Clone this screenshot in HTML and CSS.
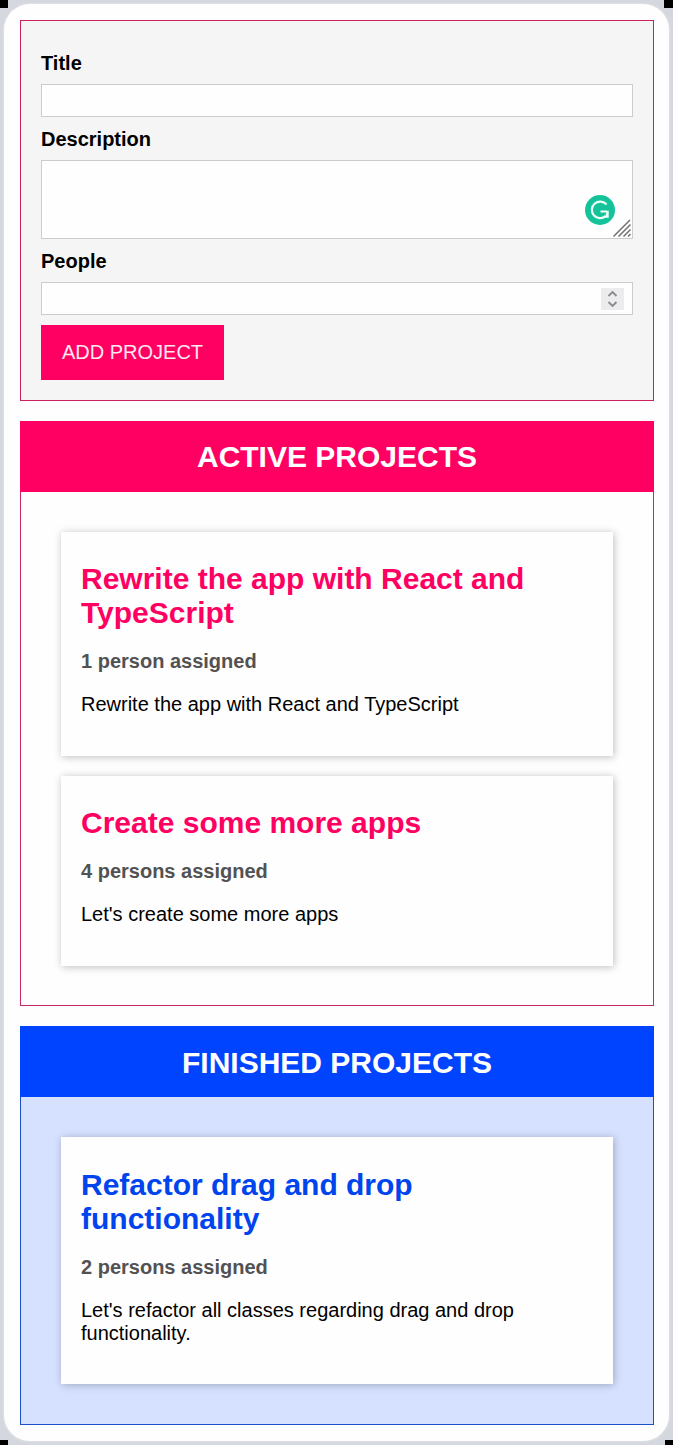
FILE: index.html
```
<!DOCTYPE html>
<html lang="en">
<head>
<meta charset="utf-8">
<title>Projects</title>
<link rel="stylesheet" href="styles.css">
</head>
<body>
<main class="page">
  <form class="project-form">
    <label class="label" for="title">Title</label>
    <input class="field" id="title" type="text">
    <label class="label" for="description">Description</label>
    <div class="control">
      <textarea class="field area" id="description"></textarea>
      <svg class="assistant" viewBox="0 0 30 30"><circle cx="15" cy="15" r="15" fill="#15c39a"/><path d="M21.500 9.500A8.300 8.300 0 1 0 20.500 21.200M15.500 16.500h7" fill="none" stroke="#effffa" stroke-width="2.200"/><path d="M23.700 15.400v7.300h-5.500l2.200-2 1.300-4.200z" fill="#effffa"/></svg>
      <svg class="grip" viewBox="0 0 18 18"><path d="M.5 17.500L17 1M5.500 17.500L17.500 5.500M10.500 17.500l7-7M15 17.500l2.500-2.500" stroke="#707070" stroke-width="1.500"/></svg>
    </div>
    <label class="label" for="people">People</label>
    <div class="control">
      <input class="field" id="people" type="text">
      <svg class="spinner" viewBox="0 0 23 22"><path fill="#ececef" d="M0 0h23v22H0z"/><path d="M7.500 8l4-4 4 4M7.500 14l4 4 4-4" fill="none" stroke="#8a8a8a" stroke-width="1.800"/></svg>
    </div>
    <button class="submit" type="button">ADD PROJECT</button>
  </form>

  <section class="projects active">
    <header class="heading"><h2>ACTIVE PROJECTS</h2></header>
    <div class="list">
      <article class="card">
        <h2>Rewrite the app with React and TypeScript</h2>
        <h3>1 person assigned</h3>
        <p>Rewrite the app with React and TypeScript</p>
      </article>
      <article class="card">
        <h2>Create some more apps</h2>
        <h3>4 persons assigned</h3>
        <p>Let's create some more apps</p>
      </article>
    </div>
  </section>

  <section class="projects finished">
    <header class="heading"><h2>FINISHED PROJECTS</h2></header>
    <div class="list">
      <article class="card">
        <h2>Refactor drag and drop functionality</h2>
        <h3>2 persons assigned</h3>
        <p>Let's refactor all classes regarding drag and drop functionality.</p>
      </article>
    </div>
  </section>
</main>
<i class="corner top-left"></i><i class="corner top-right"></i><i class="corner bottom-left"></i><i class="corner bottom-right"></i>
</body>
</html>
```
FILE: styles.css
```
* { box-sizing: border-box; }
body {
  margin: 0;
  height: 1445px;
  padding: 4px;
  overflow: hidden;
  position: relative;
  background: #d5d7de;
  font: 20px/23px "Liberation Sans", Arial, sans-serif;
  color: #000;
}
h2, h3, p { margin: 0; }
.page {
  height: 1437px;
  padding: 16px 15px 16px 16px;
  border-radius: 26px;
  background: #fefefe;
  box-shadow: 0 0 3px #e9eaee;
  display: flex;
  flex-direction: column;
  gap: 20px;
}
.project-form {
  height: 381px;
  padding: 31px 20px 19px;
  border: 1px solid #cc2060;
  background: #f5f5f5;
}
.label { display: block; margin-bottom: 9px; font-weight: bold; }
.field {
  display: block;
  width: 100%;
  height: 33px;
  margin: 0 0 11px;
  border: 1px solid #ccc;
  background: #fefefe;
  outline: none;
}
.area { height: 79px; resize: none; }
.control { position: relative; }
.assistant { position: absolute; width: 30px; height: 30px; right: 18px; top: 35px; }
.grip { position: absolute; width: 18px; height: 18px; right: 2px; top: 59px; }
.spinner { position: absolute; width: 23px; height: 22px; right: 9px; top: 6px; }
.submit {
  display: block;
  width: 183px;
  height: 55px;
  margin-top: -1px;
  padding: 0;
  border: 0;
  background: #ff0062;
  color: #ffe8f1;
  font: inherit;
}
.heading {
  height: 71px;
  display: flex;
  align-items: center;
  justify-content: center;
  color: #fff;
}
.heading h2 { font-size: 30px; line-height: 34px; padding-top: 1px; }
.list {
  padding: 40px 40px 39px;
  border: 1px solid;
  border-top: 0;
  display: flex;
  flex-direction: column;
  gap: 20px;
}
.active .heading { background: #ff0062; }
.active .list { border-color: #c72866; }
.finished .heading { background: #0044ff; }
.finished .heading h2 { padding-top: 2px; }
.finished .list { padding-bottom: 40px; border-color: #1c50ca; background: #d6e1ff; }
.card {
  padding: 30px 20px 40px;
  background: #fefefe;
  box-shadow: 1px 1px 8px rgba(0, 0, 0, .26);
  display: flex;
  flex-direction: column;
  gap: 20px;
}
.card h2 { font-size: 30px; line-height: 34px; color: #ff0062; }
.card h3 { font-size: 20px; line-height: 23px; color: #525252; }
.finished .card { padding: 31px 20px 39px; }
.finished .card h2 { color: #0044ee; }
.corner { position: absolute; width: 8px; height: 8px; background: #000; }
.top-left { left: 0; top: 0; }
.top-right { right: 0; top: 0; width: 9px; }
.bottom-left { left: 0; bottom: 0; height: 5px; }
.bottom-right { right: 0; bottom: 0; height: 5px; }
```
